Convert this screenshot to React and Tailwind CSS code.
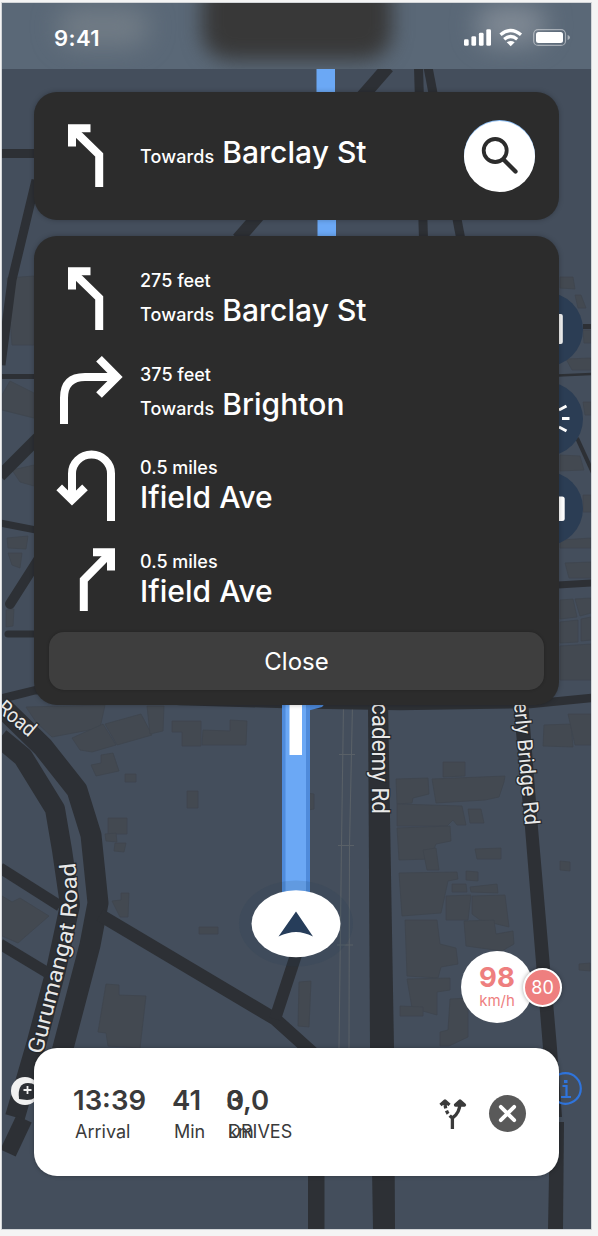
import React from "react";

const BUILDINGS = [
  "26,707 105,705 100,728 52,737 36,722",
  "72,738 103,724 116,745 92,752 80,750",
  "105,724 141,714 152,735 117,745",
  "147,706 164,706 163,731 150,734",
  "172,721 201,721 201,746 182,746 182,732 172,732",
  "203,730 230,731 230,720 247,721 246,745 202,745",
  "91,765 101,763 101,755 113,753 119,771 96,776",
  "125,774 136,774 136,782 125,782",
  "187,791 198,791 198,808 187,808",
  "108,818 127,818 127,834 108,834",
  "105,834 116,833 117,842 106,841",
  "115,843 126,843 124,852 114,851",
  "112,901 121,900 121,893 129,893 128,917 120,917",
  "199,927 218,927 218,934 199,934",
  "2,896 12,902 20,898 49,916 18,943 2,936",
  "106,984 119,985 119,995 146,996 140,1048 108,1046 106,1033 98,1032",
  "396,779 428,778 429,794 413,798 412,803 397,804",
  "432,779 505,776 504,782 499,797 485,800 436,803",
  "443,762 465,762 465,776 443,777",
  "397,804 430,805 462,806 466,825 457,825 453,820 447,826 397,826",
  "468,809 481,809 484,823 470,823",
  "397,828 450,826 451,841 436,844 430,859 399,860",
  "423,850 436,848 439,870 427,870",
  "475,849 501,848 501,859 477,859",
  "466,871 478,872 478,881 466,880",
  "399,873 457,872 458,879 448,881 441,913 402,916",
  "452,884 466,884 467,892 452,892",
  "470,887 497,884 498,893 471,892",
  "446,896 471,895 468,920 446,920",
  "472,896 505,895 509,927 480,920 472,914",
  "405,920 437,920 440,944 456,948 458,964 441,967 438,978 407,976",
  "464,921 494,920 496,934 513,931 514,944 502,951 466,946",
  "407,979 450,978 450,990 437,992 437,1015 412,1008",
  "400,1006 423,1007 423,1016 400,1016",
  "450,999 468,998 468,1037 449,1046 440,1046 440,1032 448,1030",
  "544,725 571,724 573,747 543,746",
  "568,714 591,714 591,745 575,745",
  "560,861 570,862 570,871 560,870",
  "579,964 590,963 590,971 579,970",
  "299,982 311,981 309,1027 298,1026",
  "306,793 314,794 314,809 308,810",
  "7,278 34,276 34,345 12,345",
  "2,395 10,381 34,393 34,418 2,410",
  "12,470 34,465 34,486 20,482",
  "7,538 28,536 26,549 8,548",
  "8,553 22,553 20,568 12,565",
  "6,610 14,609 13,626 6,627",
  "560,277 573,277 575,289 560,288",
  "575,295 581,295 586,308 578,308",
  "583,330 591,330 591,343 584,343",
  "566,359 591,358 591,370 572,370",
  "560,455 580,456 584,470 560,471",
  "583,495 591,495 591,512 583,512",
  "583,402 591,402 591,415 585,415",
  "560,540 591,538 591,548 560,548",
  "565,563 591,562 591,578 569,578",
  "560,600 573,599 577,617 560,619",
  "575,599 591,598 591,613 580,616",
  "560,622 578,620 578,642 560,643",
  "581,619 591,617 591,640 581,641",
  "560,646 591,644 591,680 560,680",
];

function MapBackdrop() {
  return (
    <svg className="absolute inset-0 h-full w-full" viewBox="2 3 589 1226" aria-hidden="true">
      <rect x="2" y="3" width="589" height="1226" fill="#444e5c" />
      <g fill="#434951" stroke="#3f454e" strokeWidth="0.8">
        {BUILDINGS.map((points) => (
          <polygon key={points} points={points} />
        ))}
      </g>
      <g fill="none" stroke="#596067" strokeWidth="1.1">
        <path d="M343.5 705L341.5 845L339 1048M352.5 705L349.5 845L349 1048" />
        <path d="M339 754.500H355M338 845.500H354M337 945H353" />
      </g>
      <g fill="none" stroke="#2d3035" strokeLinejoin="round">
        <path d="M388 67L238 239" strokeWidth="13" />
        <path d="M418.500 67L423.500 240" strokeWidth="9" />
        <path d="M428 67L461 240" strokeWidth="9" />
        <path d="M2 153.500H40" strokeWidth="9" />
        <path d="M36 180L12 280L1 365" strokeWidth="9" />
        <path d="M2 376.500H40" strokeWidth="5" />
        <path d="M0 476L38 438" strokeWidth="12" />
        <path d="M0 523L36 530" strokeWidth="7" />
        <path d="M10 604L38 560" strokeWidth="10" strokeLinecap="round" />
        <path d="M8 634H40" strokeWidth="7" strokeLinecap="round" />
        <path d="M583 326.500H592" strokeWidth="5" />
        <path d="M558 375.500L592 374" strokeWidth="2.500" />
        <path d="M577 438L593 473" strokeWidth="4" />
        <path d="M558 585L592 583" strokeWidth="7" />
        <path d="M0 699L36 690L180 701L285 704L400 706L530 704L592 698" strokeWidth="8.500" />
        <path d="M0 705L43 747L77 790L91 835L98 903L90 945L63 1048L45 1110" strokeWidth="21" />
        <path d="M0 738L23 757L55 809L62 850L70 905L56 970L36 1045L15 1117" strokeWidth="20" />
        <path d="M24 1119L8 1153" strokeWidth="17" />
        <path d="M0 868L60 906" strokeWidth="11" />
        <path d="M0 944L48 973" strokeWidth="11" />
        <path d="M100 915L275 1019L315 1055" strokeWidth="13" />
        <path d="M296 955L275 1019" strokeWidth="12" />
      </g>
      <g fill="#2d3035">
        <polygon points="368,700 388,700 394,1048 395,1229 373,1229 370,1048" />
        <polygon points="513,700 528,700 538,828 557,1048 562,1117 549,1117 543,1048 525,828" />
        <polygon points="550,1122 564,1122 563,1229 548,1229" />
        <polygon points="308,1170 324.500,1170 324.500,1229 308,1229" />
      </g>
      <g fill="#6ba8f5">
        <rect x="316.500" y="60" width="18.500" height="40" />
        <rect x="317.500" y="215" width="18.500" height="25" />
      </g>
      <polygon points="306,700 328,700 322,707 307,711" fill="#4a86d6" />
      <rect x="282" y="700" width="28" height="200" fill="#4f8bdb" />
      <rect x="285.500" y="700" width="20.500" height="200" fill="#6ba8f5" />
      <rect x="289.500" y="700" width="12.500" height="55" fill="#fff" />
      <ellipse cx="296" cy="923.500" rx="57" ry="43" fill="#1d4058" opacity="0.13" />
      <ellipse cx="296" cy="923.800" rx="44.500" ry="33.500" fill="#fff" />
      <path d="M296 911.500L313 936.500Q304 932 296 932Q288 932 278.500 936.500Z" fill="#263d5a" />
      <g
        className="font-['Roboto',sans-serif]"
        fill="#e8e8e8"
        stroke="#26292d"
        strokeWidth="2.500"
        paintOrder="stroke"
        fontSize="23"
      >
        <text transform="translate(372 703) rotate(90)" textLength="111" lengthAdjust="spacingAndGlyphs">cademy Rd</text>
        <text transform="translate(514 703) rotate(84.800)" fontSize="21" textLength="123" lengthAdjust="spacingAndGlyphs">erly Bridge Rd</text>
        <text transform="translate(-4 710) rotate(40)" fontSize="21" textLength="43" lengthAdjust="spacingAndGlyphs">Road</text>
        <path id="gurumangat" d="M42 1055L73 935Q81 895 73 850" fill="none" stroke="none" />
        <text fontSize="22">
          <textPath href="#gurumangat" textLength="197" lengthAdjust="spacingAndGlyphs">Gurumangat Road</textPath>
        </text>
      </g>
      <circle cx="25" cy="1091" r="14" fill="#f1f1f1" />
      <path d="M19 1099Q17 1083 28 1083Q37 1083 37 1091Q37 1100 27 1100Z" fill="#2d3035" />
      <path d="M27.500 1086V1094M23.500 1090H31.500" stroke="#f1f1f1" strokeWidth="1.800" />
      <g fill="none" stroke="#2f74dc" strokeWidth="2.200">
        <circle cx="565.500" cy="1088.500" r="15.300" />
        <path d="M562.500 1086H566.500V1097M561 1097H571" />
      </g>
      <rect x="564" y="1080" width="3.500" height="3" fill="#2f74dc" />
      <g fill="#2b3d54">
        <circle cx="546" cy="329.500" r="37" />
        <circle cx="546" cy="419" r="37" />
        <circle cx="546" cy="508.500" r="37" />
      </g>
      <rect x="550" y="314" width="12.800" height="30" rx="2" fill="#f2f2f2" />
      <rect x="550" y="496.500" width="14.700" height="24.500" rx="2.500" fill="#fff" />
      <path d="M559 410L566.500 406M562 418.500H569.500M559 427L566.500 431" stroke="#fff" strokeWidth="3" fill="none" />
    </svg>
  );
}

function StatusBar() {
  return (
    <header className="relative flex h-[66px] shrink-0 items-start justify-between overflow-hidden bg-[#5a6877] pl-[52px] pr-[20px] text-white">
      <div className="absolute left-[55px] top-[4px] h-[40px] w-[92px] rounded-full bg-[#808890]/60 blur-[13px]" />
      <div className="absolute left-[474px] top-[2px] h-[40px] w-[70px] rounded-full bg-[#9aa0a8]/60 blur-[13px]" />
      <div className="absolute left-[200px] top-[-30px] h-[87px] w-[190px] rounded-[28px] bg-[#383838] blur-[10px]" />
      <time className="relative mt-[21.500px] text-[22px] leading-[26px] font-semibold tracking-[0.020em]">9:41</time>
      <svg className="relative mt-[22px] h-[24px] w-[109px]" viewBox="462 25 109 24" fill="#fff" aria-hidden="true">
        <rect x="464" y="39.300" width="4.700" height="6.500" rx="1.400" />
        <rect x="471.400" y="36.200" width="4.700" height="9.600" rx="1.400" />
        <rect x="478.900" y="32.800" width="4.700" height="13" rx="1.400" />
        <rect x="486.300" y="29.200" width="4.700" height="16.600" rx="1.400" />
        <path d="M500.500 34.800Q510.700 26.200 521 34.800M504.200 39.300Q510.700 33.800 517.200 39.300" fill="none" stroke="#fff" strokeWidth="3.300" />
        <path d="M506.700 42.300Q510.700 39.500 514.700 42.300L510.700 46.200Z" />
        <rect x="533.700" y="29.600" width="31.800" height="15.800" rx="4.500" fill="none" stroke="#fff" strokeWidth="1.200" opacity="0.45" />
        <rect x="536" y="32" width="27" height="11" rx="2.500" />
        <path d="M567.600 35V40Q570 39.300 570 37.500Q570 35.700 567.600 35Z" opacity="0.5" />
      </svg>
    </header>
  );
}

function TurnIcon({ kind }) {
  return (
    <svg className="h-[72px] w-[68px] shrink-0" viewBox="56 262 68 72" fill="none" stroke="#fff" strokeWidth="8" aria-hidden="true">
      {kind === "slightLeft" && (
        <>
          <path d="M90.500 271.300H72V289.500" />
          <path d="M73 272.300L99.200 298V330" />
        </>
      )}
      {kind === "right" && (
        <>
          <path d="M64 330V304Q64 283 85 283H116" />
          <path d="M99 264.800L117 283L99 301" />
        </>
      )}
      {kind === "uTurn" && (
        <>
          <path d="M111 334V286.500A19.500 19 0 0 0 72 286.500V311" />
          <path d="M59.200 300.300L72 313L85 300.300" />
        </>
      )}
      {kind === "slightRight" && (
        <>
          <path d="M93 271.300H111V289.500" />
          <path d="M110 272.300L83.800 299V330" />
        </>
      )}
    </svg>
  );
}

function Street({ prefix, name }) {
  return (
    <p className="flex items-baseline gap-[8px] whitespace-nowrap leading-[36px]">
      {prefix && <span className="text-[18px] font-[450] tracking-[0.006em]">{prefix}</span>}
      <span className="text-[30px] font-[450] tracking-[0.001em]">{name}</span>
    </p>
  );
}

const STEPS = [
  { kind: "slightLeft", distance: "275 feet", prefix: "Towards", name: "Barclay St" },
  { kind: "right", distance: "375 feet", prefix: "Towards", name: "Brighton" },
  { kind: "uTurn", distance: "0.5 miles", name: "Ifield Ave" },
  { kind: "slightRight", distance: "0.5 miles", name: "Ifield Ave" },
];

function Stat({ value, label, className }) {
  return (
    <div className={className}>
      <div className="text-[27.500px] leading-[32px] font-semibold">{value}</div>
      <div className="pl-[2px] text-[18px] leading-[32px]">{label}</div>
    </div>
  );
}

function CurrentTurn() {
  return (
    <section className="mt-[23px] flex h-[128px] shrink-0 items-start rounded-[23px] bg-[#2c2c2c] pl-[22px] shadow-[0_0_5px_rgba(0,0,0,0.25)]">
      <div className="mt-[27px]">
        <TurnIcon kind="slightLeft" />
      </div>
      <div className="ml-[16px] mt-[42px] grow">
        <Street prefix="Towards" name="Barclay St" />
      </div>
      <button className="mr-[24px] mt-[29px] grid size-[71px] place-items-center rounded-full bg-white shadow-[0_-1px_0_#8fc0f5]">
        <svg className="size-[71px]" viewBox="464.500 120.500 71 71" fill="none" stroke="#2c2c2c" aria-label="Search">
          <circle cx="495.700" cy="150" r="11.500" strokeWidth="3.800" />
          <path d="M504 159L516 171" strokeWidth="4.300" strokeLinecap="round" />
        </svg>
      </button>
    </section>
  );
}

function SpeedBadge() {
  return (
    <div className="mr-[-3px] mt-[246px] flex shrink-0 items-center justify-end text-[#ee7f7f]">
      <div className="flex size-[72px] flex-col items-center rounded-full bg-white pt-[10px]">
        <span className="text-[27.500px] leading-[32px] font-bold">98</span>
        <span className="text-[15px] leading-[16px]">km/h</span>
      </div>
      <div className="ml-[-10px] grid size-[39px] place-items-center rounded-full border-[2.500px] border-white bg-[#ee7f7f] text-[18px] text-white shadow-[0_0_4px_rgba(0,0,0,0.35)]">
        80
      </div>
    </div>
  );
}

function TripBar() {
  return (
    <footer className="mt-[25px] flex h-[128px] shrink-0 items-start rounded-[23px] bg-white pl-[39px] pr-[33px] text-[#3a3a3a] shadow-[0_0_4px_rgba(0,0,0,0.3)]">
      <Stat className="mt-[36px] w-[99px]" value="13:39" label="Arrival" />
      <Stat className="mt-[36px] w-[54px]" value="41" label="Min" />
      <div className="mt-[36px] grid grow">
        <Stat className="[grid-area:1/1]" value="3,0" label="km" />
        <Stat className="[grid-area:1/1]" value="0" label="DRIVES" />
      </div>
      <svg className="mt-[49px] h-[34px] w-[32px]" viewBox="436 1097 32 34" fill="none" stroke="#3a3a3a" strokeWidth="3.300" aria-hidden="true">
        <path d="M452.400 1129V1118Q460 1113 460 1102" />
        <path d="M452.400 1118Q445 1113 445 1102" strokeDasharray="3.500 2.500" />
        <path d="M440.500 1105L445 1101L449.500 1105M455.500 1105L460 1101L464.500 1105Z" fill="#3a3a3a" strokeLinejoin="round" />
      </svg>
      <button className="ml-[21px] mt-[47px] grid size-[37px] place-items-center rounded-full bg-[#595959]">
        <svg className="size-[37px]" viewBox="0 0 37 37" fill="none" stroke="#fff" strokeWidth="3.800" strokeLinecap="round" aria-label="End route">
          <path d="M11.800 11.800L25.200 25.200M25.200 11.800L11.800 25.200" />
        </svg>
      </button>
    </footer>
  );
}

export default function App() {
  return (
    <div className="flex h-[1236px] w-[598px] items-start overflow-hidden bg-[#f4f4f4] pl-[2px] pt-[3px] font-['Inter',sans-serif]">
      <main className="relative flex h-[1226px] w-[589px] flex-col overflow-hidden shadow-[0_0_0_1px_#d2d5d8]">
        <MapBackdrop />
        <StatusBar />
        <div className="relative flex flex-col pl-[32px] pr-[32px] text-white">
          <CurrentTurn />
          <section className="mt-[15.500px] h-[469.500px] shrink-0 rounded-[23px] bg-[#2c2c2c] px-[15px] pt-[26.500px] shadow-[0_0_5px_rgba(0,0,0,0.25)]">
            <ul className="flex flex-col gap-[21.600px] pl-[7px]">
              {STEPS.map((step) => (
                <li key={step.kind} className="flex h-[72px] gap-[16px]">
                  <TurnIcon kind={step.kind} />
                  <div className="pt-[8px]">
                    <p className="text-[18px] leading-[22px] font-[450]">{step.distance}</p>
                    <Street prefix={step.prefix} name={step.name} />
                  </div>
                </li>
              ))}
            </ul>
            <button className="mt-[17.500px] h-[58px] w-full rounded-[15px] bg-[#3e3e3e] pt-[2px] text-[24px] shadow-[0_0_3px_rgba(0,0,0,0.25)]">
              Close
            </button>
          </section>
          <SpeedBadge />
          <TripBar />
        </div>
      </main>
    </div>
  );
}
